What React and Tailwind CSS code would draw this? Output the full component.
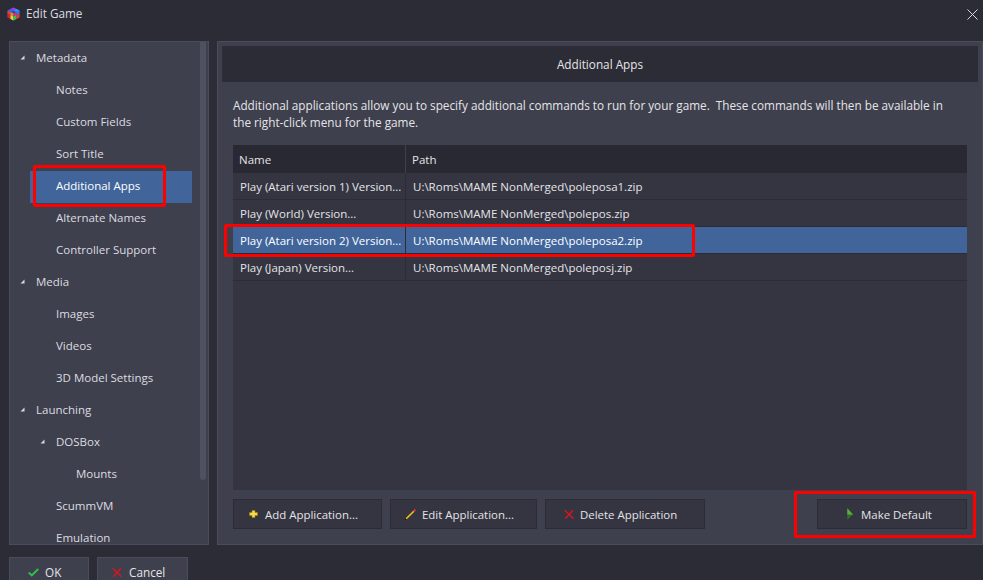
import React from "react";

const font = { fontFamily: '"Open Sans", "Noto Sans", sans-serif' };

const tree = [
  { t: "Metadata", l: 0, arrow: true },
  { t: "Notes", l: 1 },
  { t: "Custom Fields", l: 1 },
  { t: "Sort Title", l: 1 },
  { t: "Additional Apps", l: 1, sel: true },
  { t: "Alternate Names", l: 1 },
  { t: "Controller Support", l: 1 },
  { t: "Media", l: 0, arrow: true },
  { t: "Images", l: 1 },
  { t: "Videos", l: 1 },
  { t: "3D Model Settings", l: 1 },
  { t: "Launching", l: 0, arrow: true },
  { t: "DOSBox", l: 1, arrow: true },
  { t: "Mounts", l: 2 },
  { t: "ScummVM", l: 1 },
  { t: "Emulation", l: 1 },
];

const rows = [
  ["Play (Atari version 1) Version...", "U:\\Roms\\MAME NonMerged\\poleposa1.zip"],
  ["Play (World) Version...", "U:\\Roms\\MAME NonMerged\\polepos.zip"],
  ["Play (Atari version 2) Version...", "U:\\Roms\\MAME NonMerged\\poleposa2.zip", true],
  ["Play (Japan) Version...", "U:\\Roms\\MAME NonMerged\\poleposj.zip"],
];

function Arrow() {
  return (
    <svg width="5" height="5" viewBox="0 0 5 5" className="block">
      <path d="M4.5 0.5V4.5H0.5Z" fill="#d8d8dc" />
    </svg>
  );
}

function Logo() {
  return (
    <svg width="13" height="14" viewBox="0 0 13 14" className="block">
      <path d="M6.5 0.5 12.5 3.5V10.5L6.5 13.5 0.5 10.5V3.5Z" fill="#3a3fd0" />
      <path d="M3.5 2 6.5 0.5 9.5 2 6.5 3.5Z" fill="#9b3fd0" />
      <path d="M6.5 3.5 9.5 2 12.5 3.5 9.5 5Z" fill="#2a9fe8" />
      <path d="M0.5 3.5 3.5 2 6.5 3.5 3.5 5Z" fill="#2f6fe0" />
      <path d="M0.5 3.5 3.5 5V8L0.5 6.5Z" fill="#e8431f" />
      <path d="M3.5 5 6.5 6.5V9.5L3.5 8Z" fill="#f08a20" />
      <path d="M0.5 6.5 3.5 8V12L0.5 10.5Z" fill="#d8241e" />
      <path d="M3.5 8 6.5 9.5V13.5L3.5 12Z" fill="#e8d820" />
      <path d="M6.5 6.5 9.5 5V8L6.5 9.5Z" fill="#e02a6a" />
      <path d="M9.5 5 12.5 3.5V6.5L9.5 8Z" fill="#2f7fe0" />
      <path d="M6.5 9.5 9.5 8V12L6.5 13.5Z" fill="#35c24a" />
      <path d="M9.5 8 12.5 6.5V10.5L9.5 12Z" fill="#f03a20" />
    </svg>
  );
}

function Check() {
  return (
    <svg width="11" height="9" viewBox="0 0 11 9" className="block">
      <path d="M0.8 4.5 3.8 7.5 10.2 1" fill="none" stroke="#2fc24a" strokeWidth="1.9" />
    </svg>
  );
}

function RedX() {
  return (
    <svg width="10" height="9" viewBox="0 0 10 9" className="block">
      <path d="M0.8 0.3 9.5 8.7M9 0.3 1.2 8.7" fill="none" stroke="#e0141e" strokeWidth="1.4" />
    </svg>
  );
}

function Plus() {
  return (
    <svg width="9" height="8" viewBox="0 0 9 8" className="block">
      <path d="M3 0.5H6V2.5H8.5V5.5H6V7.5H3V5.5H0.5V2.5H3Z" fill="#f3dc4e" stroke="#9a7e18" strokeWidth="0.7" />
    </svg>
  );
}

function Pencil() {
  return (
    <svg width="11" height="11" viewBox="0 0 11 11" className="block">
      <path d="M1.2 9.8 8.8 2.2" stroke="#5a4510" strokeWidth="2.4" fill="none" />
      <path d="M1.2 9.8 8.8 2.2" stroke="#f0c832" strokeWidth="1.3" fill="none" />
      <path d="M8.8 2.2 10.5 0.5" stroke="#d8323c" strokeWidth="2" fill="none" />
      <path d="M0 11 1.6 10.4 0.6 9.4Z" fill="#15151a" />
    </svg>
  );
}

function Play() {
  return (
    <svg width="6" height="12" viewBox="0 0 6 12" className="block">
      <path d="M0.3 0.3 6 6.5 0.3 11.7Z" fill="#2f6f28" />
      <path d="M0.3 0.3 6 6.5H0.3Z" fill="#5cae3c" />
    </svg>
  );
}

function ActionButton({ w, icon, label, iconGap, pl }) {
  return (
    <button className={`flex h-[30px] shrink-0 items-center border border-[#2b2c37] bg-[#343541] text-[11.45px] text-[#e4e4e8] ${w} ${pl} ${iconGap}`}>
      {icon}
      <span className="pt-[2px]">{label}</span>
    </button>
  );
}

export default function App() {
  return (
    <div style={font} className="relative flex h-[580px] w-[983px] flex-col overflow-hidden bg-[#2c2c36] text-[11.75px] text-[#e4e4e8]">
      <div className="flex h-[28px] shrink-0 items-center pl-[7px] pr-[5px]">
        <Logo />
        <span className="ml-[6px] text-[#dcdce0]">Edit Game</span>
        <svg width="11" height="11" viewBox="0 0 11 11" className="ml-auto">
          <path d="M0.5 0.5 10.5 10.5M10.5 0.5 0.5 10.5" stroke="#d8d8dc" strokeWidth="1" fill="none" />
        </svg>
      </div>

      <div className="mt-[13px] flex h-[504px] shrink-0 gap-[8px] pl-[9px]">
        <aside className="relative h-full w-[200px] shrink-0 overflow-hidden border border-[#4b4c5b] bg-[#3f404d] text-[11.5px]">
          <div className="w-[182px] pt-[1px]">
            {tree.map((n) => (
              <div
                key={n.t}
                className={`relative flex h-[32px] items-center ${n.l === 0 ? "pl-[26px]" : n.l === 1 ? "pl-[46px]" : "pl-[66px]"} ${n.sel ? "text-white" : "text-[#dcdce0]"}`}
              >
                {n.sel && <span className="absolute inset-y-0 left-[20px] right-0 bg-[#41659a]" />}
                {n.arrow && (
                  <span className={`absolute top-[12px] ${n.l === 0 ? "left-[10px]" : "left-[30px]"}`}>
                    <Arrow />
                  </span>
                )}
                <span className="relative pb-[2px]">{n.t}</span>
              </div>
            ))}
          </div>
          <div className="absolute right-[2px] top-0 h-[438px] w-[6px] rounded-b-[3px] bg-[#4f5060]" />
        </aside>

        <main className="flex h-full flex-1 flex-col border border-[#4b4c5b] bg-[#3f404d] px-[4px] pt-[4px]">
          <div className="flex h-[36px] shrink-0 items-center justify-center bg-[#2c2c36] pt-[2px] text-[#e4e4e8]">
            Additional Apps
          </div>
          <div className="mx-[11px] mt-[15px] h-[48px] w-[730px] shrink-0 leading-[17px] text-[#e4e4e8]">
            Additional applications allow you to specify additional commands to run for your game.&nbsp; These commands will then be available in the right-click menu for the game.
          </div>
          <div className="mx-[11px] flex h-[345px] shrink-0 flex-col bg-[#343541] text-[11.5px]">
            <div className="flex h-[28px] shrink-0 bg-[#282932]">
              <div className="flex w-[173px] items-center border-r border-[#3f404d] pl-[6px] pt-[2px]">Name</div>
              <div className="flex flex-1 items-center pl-[6px] pt-[2px]">Path</div>
            </div>
            {rows.map(([a, b, sel]) => (
              <div key={b} className={`flex h-[27px] shrink-0 border-b border-[#2b2c37] ${sel ? "bg-[#41659a] text-white" : ""}`}>
                <div className="flex w-[173px] items-center whitespace-nowrap border-r border-[#2b2c37] pl-[7px] pt-[2px]">{a}</div>
                <div className="flex flex-1 items-center pl-[7px] pt-[2px]">{b}</div>
              </div>
            ))}
          </div>
          <div className="mx-[11px] mt-[9px] flex gap-[8px]">
            <ActionButton w="w-[149px]" pl="pl-[15px]" iconGap="gap-[7px]" icon={<Plus />} label="Add Application..." />
            <ActionButton w="w-[147px]" pl="pl-[14px]" iconGap="gap-[6px]" icon={<Pencil />} label="Edit Application..." />
            <ActionButton w="w-[160px]" pl="pl-[18px]" iconGap="gap-[6px]" icon={<RedX />} label="Delete Application" />
            <div className="ml-auto">
              <ActionButton w="w-[150px]" pl="pl-[29px]" iconGap="gap-[8px]" icon={<Play />} label="Make Default" />
            </div>
          </div>
        </main>
      </div>

      <div className="mt-[12px] flex gap-[8px] pl-[9px]">
        <button className="flex h-[30px] w-[80px] items-center gap-[6px] border border-[#4b4c5b] bg-[#3f404d] pl-[18px] text-[#e4e4e8]">
          <Check /><span className="pt-[2px]">OK</span>
        </button>
        <button className="flex h-[30px] w-[91px] items-center gap-[7px] border border-[#4b4c5b] bg-[#3f404d] pl-[14px] text-[#e4e4e8]">
          <RedX /><span className="pt-[2px]">Cancel</span>
        </button>
      </div>

      <div className="pointer-events-none absolute left-[33px] top-[165px] h-[42px] w-[133px] rounded-[2px] border-[3px] border-[#fe0000]" />
      <div className="pointer-events-none absolute left-[224px] top-[224px] h-[33px] w-[471px] rounded-[2px] border-[3px] border-[#fe0000]" />
      <div className="pointer-events-none absolute left-[794px] top-[491px] h-[47px] w-[182px] rounded-[2px] border-[3px] border-[#fe0000]" />
    </div>
  );
}
